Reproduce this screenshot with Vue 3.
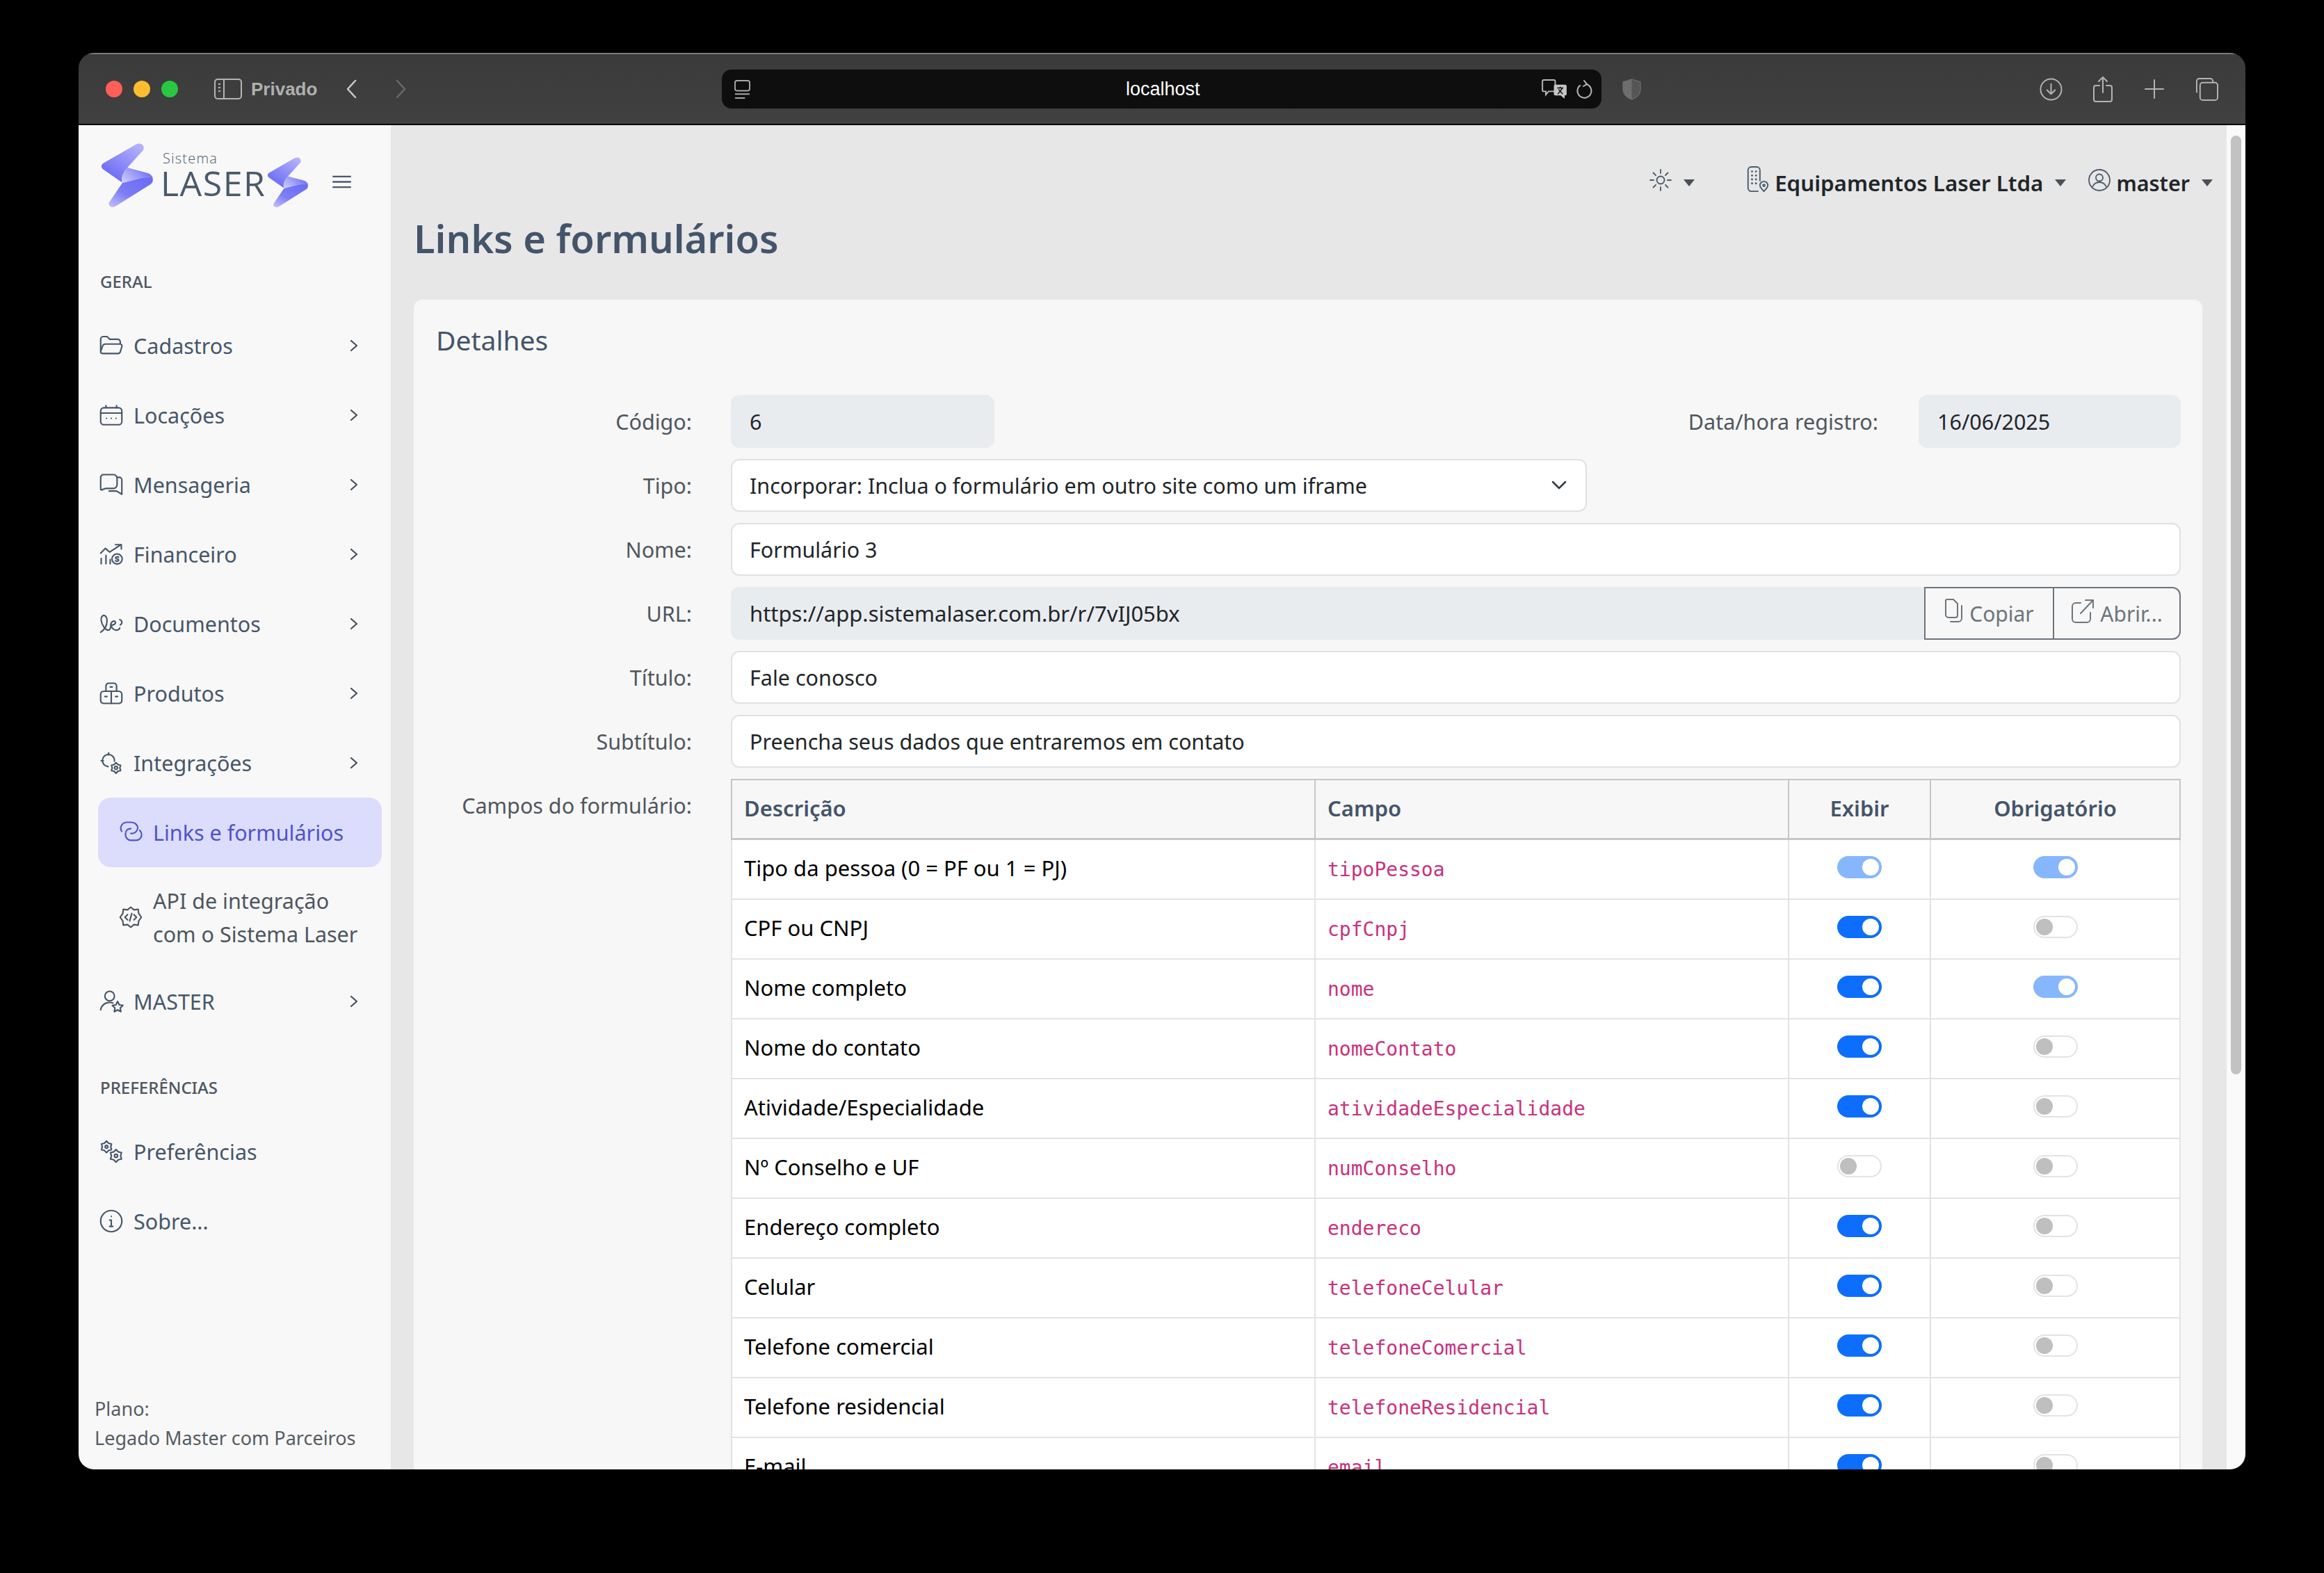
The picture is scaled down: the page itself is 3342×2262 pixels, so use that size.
<template>
  <div class="page">
    <div class="window">
      <header class="titlebar">
        <span class="light red"></span>
        <span class="light yellow"></span>
        <span class="light green"></span>
        <svg class="tb-sidebar" viewBox="0 0 40 30" fill="none" stroke="#b4b4b4" stroke-width="2">
          <rect x="1" y="1" width="38" height="28" rx="4" />
          <path d="M14 1v28M6 8h3M6 13h3M6 18h3" />
        </svg>
        <span class="private">Privado</span>
        <svg class="tb-back" viewBox="0 0 16 28" fill="none" stroke="#c8c8c8" stroke-width="2.5" stroke-linecap="round" stroke-linejoin="round">
          <path d="M14 2 3 14l11 12" />
        </svg>
        <svg class="tb-forward" viewBox="0 0 16 28" fill="none" stroke="#6a6a6a" stroke-width="2.5" stroke-linecap="round" stroke-linejoin="round">
          <path d="M2 2l11 12L2 26" />
        </svg>
        <div class="urlbar">
          <svg class="url-page" viewBox="0 0 24 28" fill="none" stroke="#a8a8a8" stroke-width="2">
            <rect x="1" y="1" width="22" height="15" rx="3" />
            <path d="M1 21h22M1 27h15" />
          </svg>
          <span class="url-text">localhost</span>
          <svg class="url-translate" viewBox="0 0 38 30">
            <path d="M3 1h15a2 2 0 0 1 2 2v13a2 2 0 0 1-2 2h-8l-4 5v-5H3a2 2 0 0 1-2-2V3a2 2 0 0 1 2-2z" fill="none" stroke="#b8b8b8" stroke-width="2" />
            <path d="M20 8h15a2 2 0 0 1 2 2v12a2 2 0 0 1-2 2h-1v5l-6-5h-8a2 2 0 0 1-2-2V10a2 2 0 0 1 2-2z" fill="#c4c4c4" />
            <path d="M23 13h9M27.500 11v2M24 22l7-9M25 15l6 7" stroke="#111" stroke-width="1.500" fill="none" />
          </svg>
          <svg class="url-reload" viewBox="0 0 24 30" fill="none" stroke="#b8b8b8" stroke-width="2" stroke-linecap="round">
            <path d="M15 7a10 10 0 1 1-9 2" />
            <path d="M12 2l4 5-5 3" />
          </svg>
        </div>
        <svg class="tb-shield" viewBox="0 0 28 32">
          <path d="M14 1 27 5v11c0 7-5 12-13 15C6 28 1 23 1 16V5z" fill="#555" stroke="#666" stroke-width="1.500" />
          <path d="M14 1 1 5v11c0 7 5 12 13 15z" fill="#6e6e6e" />
        </svg>
        <svg class="tb-download" viewBox="0 0 34 34" fill="none" stroke="#b4b4b4" stroke-width="2" stroke-linecap="round" stroke-linejoin="round">
          <circle cx="17" cy="17" r="15.500" />
          <path d="M17 9v15M11 18l6 6 6-6" />
        </svg>
        <svg class="tb-share" viewBox="0 0 28 38" fill="none" stroke="#b4b4b4" stroke-width="2" stroke-linecap="round" stroke-linejoin="round">
          <path d="M14 24V2M8 8l6-6 6 6" />
          <path d="M9 14H4a3 3 0 0 0-3 3v17a3 3 0 0 0 3 3h20a3 3 0 0 0 3-3V17a3 3 0 0 0-3-3h-5" />
        </svg>
        <svg class="tb-plus" viewBox="0 0 28 28" fill="none" stroke="#b4b4b4" stroke-width="2" stroke-linecap="round">
          <path d="M14 1v26M1 14h26" />
        </svg>
        <svg class="tb-tabs" viewBox="0 0 34 34" fill="none" stroke="#b4b4b4" stroke-width="2">
          <path d="M2 22V5a4 4 0 0 1 4-4h16a4 4 0 0 1 4 4v2" />
          <rect x="7" y="7" width="26" height="26" rx="4" />
        </svg>
      </header>

      <div class="body">
        <aside class="sidebar">
          <div class="brand">
            <svg class="bolt" viewBox="0 0 76 93">
              <defs>
                <linearGradient id="boltTop" x1="0.800" y1="0" x2="0.200" y2="0.800">
                  <stop offset="0" stop-color="#b3b0fb" />
                  <stop offset="1" stop-color="#6f70f5" />
                </linearGradient>
                <linearGradient id="boltFold" x1="0" y1="0.800" x2="1" y2="0.300">
                  <stop offset="0" stop-color="#cbc9fd" />
                  <stop offset="1" stop-color="#6a6bf4" />
                </linearGradient>
                <linearGradient id="boltLow" x1="0.900" y1="0" x2="0.100" y2="1">
                  <stop offset="0" stop-color="#6a6bf4" />
                  <stop offset="0.600" stop-color="#7c7df6" />
                  <stop offset="1" stop-color="#bcbafc" />
                </linearGradient>
              </defs>
              <path d="M50 2C57-2 64 3 61 10L39 34 30 56 4 38C0 35 0 32 3 29Z" fill="url(#boltTop)" />
              <path d="M31 57C45 54 60 48 74 48 76 54 74 58 70 60L22 90C16 94 10 91 12 85Z" fill="url(#boltLow)" />
              <path d="M38 35 68 43C74 46 75 49 74 50 60 48 45 54 31 57 28 50 32 41 38 35Z" fill="url(#boltFold)" />
            </svg>
            <div class="brand-text">
              <span class="brand-small">Sistema</span>
              <span class="brand-big">LASER</span>
            </div>
            <svg class="bolt bolt-small" viewBox="0 0 76 93">
              <path d="M50 2C57-2 64 3 61 10L39 34 30 56 4 38C0 35 0 32 3 29Z" fill="url(#boltTop)" />
              <path d="M31 57C45 54 60 48 74 48 76 54 74 58 70 60L22 90C16 94 10 91 12 85Z" fill="url(#boltLow)" />
              <path d="M38 35 68 43C74 46 75 49 74 50 60 48 45 54 31 57 28 50 32 41 38 35Z" fill="url(#boltFold)" />
            </svg>
            <svg class="burger" viewBox="0 0 30 20" fill="none" stroke="#4a5a6c" stroke-width="2.400">
              <path d="M1 2h28M1 10h28M1 18h28" />
            </svg>
          </div>

          <div class="section-title first">GERAL</div>
          <a v-for="item in mainItems" :key="item.label" class="nav-item" :class="item.kind">
            <svg class="nav-icon" viewBox="1.500 1.500 21 21" fill="none" stroke="currentColor" stroke-width="1.400" stroke-linecap="round" stroke-linejoin="round">
              <path v-for="d in item.icon" :key="d" :d="d" />
            </svg>
            <span class="nav-label" v-html="item.label"></span>
            <svg v-if="item.kind === 'parent'" class="nav-chevron" viewBox="0 0 12 20" fill="none" stroke="#44505e" stroke-width="2.200" stroke-linecap="round" stroke-linejoin="round">
              <path d="M2 3l8 7-8 7" />
            </svg>
          </a>

          <div class="section-title">PREFERÊNCIAS</div>
          <a v-for="item in prefItems" :key="item.label" class="nav-item">
            <svg class="nav-icon" viewBox="1.500 1.500 21 21" fill="none" stroke="currentColor" stroke-width="1.400" stroke-linecap="round" stroke-linejoin="round">
              <path v-for="d in item.icon" :key="d" :d="d" />
            </svg>
            <span class="nav-label">{{ item.label }}</span>
          </a>

          <div class="plan">
            <div>Plano:</div>
            <div>Legado Master com Parceiros</div>
          </div>
        </aside>

        <main class="main">
          <div class="topbar">
            <svg class="sun" viewBox="0 0 32 32" fill="none" stroke="#4a5a6c" stroke-width="1.800" stroke-linecap="round">
              <circle cx="16" cy="16" r="5.500" />
              <path d="M16 1v5M16 26v5M1 16h5M26 16h5M5.500 5.500l3.500 3.500M23 23l3.500 3.500M5.500 26.500 9 23M23 9l3.500-3.500" />
            </svg>
            <span class="caret slate"></span>
            <svg class="company" viewBox="0 0 32 40" fill="none" stroke="#4a5a6c" stroke-width="2" stroke-linecap="round">
              <path d="M16 38H6a5 5 0 0 1-5-5V6a5 5 0 0 1 5-5h8a5 5 0 0 1 5 5v16" />
              <path d="M7 8h.1M13 8h.1M7 14h.1M13 14h.1M7 20h.1M13 20h.1M7 26h.1M13 26h.1" stroke-width="3" />
              <path d="M25 38c-4-4-6-6-6-9a6 6 0 0 1 12 0c0 3-2 5-6 9z" />
              <circle cx="25" cy="29" r="1.500" />
            </svg>
            <span class="top-text company-name">Equipamentos Laser Ltda</span>
            <span class="caret"></span>
            <svg class="user" viewBox="0 0 32 32" fill="none" stroke="#4a5a6c" stroke-width="1.800">
              <circle cx="16" cy="16" r="15" />
              <circle cx="16" cy="12.500" r="5" />
              <path d="M6 26c2-5 6-7 10-7s8 2 10 7" />
            </svg>
            <span class="top-text">master</span>
            <span class="caret"></span>
          </div>

          <h1 class="page-title">Links e formulários</h1>

          <section class="card">
            <h2 class="card-title">Detalhes</h2>
            <div class="form">
              <label class="field-label">Código:</label>
              <div class="row-split">
                <input class="input readonly code-input" value="6" readonly />
                <label class="field-label date-label">Data/hora registro:</label>
                <input class="input readonly date-input" value="16/06/2025" readonly />
              </div>

              <label class="field-label">Tipo:</label>
              <div class="select-wrap">
                <select class="input select">
                  <option>Incorporar: Inclua o formulário em outro site como um iframe</option>
                </select>
                <svg class="select-chevron" viewBox="0 0 24 14" fill="none" stroke="#343a40" stroke-width="2.500" stroke-linecap="round" stroke-linejoin="round">
                  <path d="M3 2l9 9 9-9" />
                </svg>
              </div>

              <label class="field-label">Nome:</label>
              <input class="input" value="Formulário 3" />

              <label class="field-label">URL:</label>
              <div class="input-group">
                <input class="input readonly group-input" value="https://app.sistemalaser.com.br/r/7vIJ05bx" readonly />
                <button class="group-btn copy">
                  <svg class="btn-icon" viewBox="0 0 28 36" fill="none" stroke="#6c757d" stroke-width="2" stroke-linecap="round" stroke-linejoin="round">
                    <path d="M4 1h9l6 6v17a3 3 0 0 1-3 3H6a4 4 0 0 1-4-4V3a2 2 0 0 1 2-2z" />
                    <path d="M25 10v18a5 5 0 0 1-5 5H9" />
                  </svg>
                  Copiar
                </button>
                <button class="group-btn open">
                  <svg class="btn-icon wide" viewBox="0 0 34 36" fill="none" stroke="#6c757d" stroke-width="2" stroke-linecap="round" stroke-linejoin="round">
                    <path d="M14 6H7a5 5 0 0 0-5 5v18a5 5 0 0 0 5 5h16a5 5 0 0 0 5-5v-9" />
                    <path d="M14 21 32 2M21 2h11v11" />
                  </svg>
                  Abrir...
                </button>
              </div>

              <label class="field-label">Título:</label>
              <input class="input" value="Fale conosco" />

              <label class="field-label">Subtítulo:</label>
              <input class="input" value="Preencha seus dados que entraremos em contato" />

              <label class="field-label">Campos do formulário:</label>
              <table class="fields">
                <colgroup>
                  <col style="width: 839px" />
                  <col style="width: 681px" />
                  <col style="width: 204px" />
                  <col style="width: 359px" />
                </colgroup>
                <thead>
                  <tr>
                    <th>Descrição</th>
                    <th>Campo</th>
                    <th class="center">Exibir</th>
                    <th class="center">Obrigatório</th>
                  </tr>
                </thead>
                <tbody>
                  <tr v-for="f in fields" :key="f.code">
                    <td>{{ f.desc }}</td>
                    <td><code class="code">{{ f.code }}</code></td>
                    <td class="center"><span class="toggle" :class="toggleClass(f.show, f.showLocked)"></span></td>
                    <td class="center"><span class="toggle" :class="toggleClass(f.req, f.reqLocked)"></span></td>
                  </tr>
                </tbody>
              </table>
            </div>
          </section>
        </main>

        <div class="scrolltrack"><div class="scrollthumb"></div></div>
      </div>
    </div>
  </div>
</template>

<script setup>
// toothed gear outline, used by the settings style icons
function gear(cx, cy, r) {
  const pts = []
  for (let i = 0; i < 12; i++) {
    const a = (Math.PI / 6) * i
    const rad = i % 2 === 0 ? r : r * 0.72
    pts.push(`${(cx + rad * Math.sin(a)).toFixed(2)} ${(cy - rad * Math.cos(a)).toFixed(2)}`)
  }
  return 'M' + pts.join('L') + 'Z'
}

function circle(cx, cy, r) {
  return `M${cx - r} ${cy}a${r} ${r} 0 1 0 ${r * 2} 0a${r} ${r} 0 1 0 ${-r * 2} 0`
}

const mainItems = [
  {
    label: 'Cadastros',
    kind: 'parent',
    icon: [
      'M2 17V6a2.500 2.500 0 0 1 2.500-2.500H8l2.500 2.500H18a2.500 2.500 0 0 1 2.500 2.500V10',
      'M2 17.500 4 12a2.500 2.500 0 0 1 2.300-1.500h14A1.800 1.800 0 0 1 22 13l-1.500 5a2.500 2.500 0 0 1-2.400 1.500H4a2 2 0 0 1-2-2z',
    ],
  },
  {
    label: 'Locações',
    kind: 'parent',
    icon: [
      'M2 8a3 3 0 0 1 3-3h14a3 3 0 0 1 3 3v10a3 3 0 0 1-3 3H5a3 3 0 0 1-3-3z',
      'M2 10h20',
      'M7 3v2M17 3v2',
      'M7.500 15h.01M12 15h.01M16.500 15h.01',
    ],
  },
  {
    label: 'Mensageria',
    kind: 'parent',
    icon: [
      'M2 5a2.500 2.500 0 0 1 2.500-2.500H14A3.500 3.500 0 0 1 17.500 6v6a3.500 3.500 0 0 1-3.500 3.500H7L2.500 17 2 16.500z',
      'M18 5h1.500A2.500 2.500 0 0 1 22 7.500V21l-5-3H10',
    ],
  },
  {
    label: 'Financeiro',
    kind: 'parent',
    icon: [
      'M2.500 21v-5M7 21v-8M11 21v-4',
      'M2 11l4.500-4.500 4 3.500L21 3',
      'M16 3h5.500v4',
      circle(17.500, 16.500, 4.800),
      'M19 15c-1-1-3-.7-3 .5s3 .8 3 2-2 1.500-3 .5',
    ],
  },
  {
    label: 'Documentos',
    kind: 'parent',
    icon: [
      'M2 20c3-2 6-6 6-11 0-3-1.500-5-3-5S2 6 2.500 9c.6 4 4 9 6.500 9 2 0 2.500-2.500 2.500-4',
      'M11.500 13c0-2 1.500-3.500 3-3.500s2 1.500 1 2.500-3 1.500-4 1c1 3 3 5 5 5 1.500 0 3-.5 3.500-2',
      'M20 8c1 .5 2 1.500 2 2.500s-.5 2-1.500 2.500',
    ],
  },
  {
    label: 'Produtos',
    kind: 'parent',
    icon: [
      'M7 10V5a2.500 2.500 0 0 1 2.500-2.500h5A2.500 2.500 0 0 1 17 5v5',
      'M2 13a3 3 0 0 1 3-3h14a3 3 0 0 1 3 3v6a2.500 2.500 0 0 1-2.500 2.500h-15A2.500 2.500 0 0 1 2 19z',
      'M12 10v11.500M6 15h2M16 15h2M11 6h2',
    ],
  },
  {
    label: 'Integrações',
    kind: 'parent',
    icon: [
      'M9 15.500A5.700 5.700 0 1 1 15 10.500',
      'M9.500 2.500v2M2.500 10h2',
      gear(16.500, 16.800, 5),
      circle(16.500, 16.800, 1.400),
    ],
  },
  {
    label: 'Links e formulários',
    kind: 'active',
    icon: [
      'M3.500 11C1.500 8 3 3 8 2.500H12C16 2.500 19 5 18.500 8.500 18 11.500 15 13.500 12 13',
      'M12 8.500C8.500 8.500 7 11 7 14 7 17 9.500 19.500 12 19.500H17C20 19.500 22.300 17 22.300 14 22.300 12.500 21.500 11 20.500 10',
    ],
  },
  {
    label: 'API de integração<br>com o Sistema Laser',
    kind: 'sub',
    icon: [
      'M12 2.500l3 2.500 4-.5.5 4 2.500 3.500-2.500 3.500-.5 4-4-.5-3 2.500-3-2.500-4 .5-.5-4L2 12l2.500-3.500.5-4 4 .5z',
      'M9 9.500 6.500 12 9 14.500M15 9.500l2.500 2.500-2.500 2.500M13 8.500l-2 7',
    ],
  },
  {
    label: 'MASTER',
    kind: 'parent',
    icon: [
      circle(10.500, 7, 4.500),
      'M2 20c.5-4 4-7 8.500-7 1 0 2 .2 3 .5',
      'M18 12l1.600 3.300 3.400.5-2.500 2.400.6 3.500-3.100-1.700-3.100 1.700.6-3.500-2.500-2.400 3.400-.5z',
    ],
  },
]

const prefItems = [
  {
    label: 'Preferências',
    icon: [gear(7.500, 7.500, 5.500), circle(7.500, 7.500, 1.300), gear(16.500, 16, 6), circle(16.500, 16, 1.500)],
  },
  {
    label: 'Sobre...',
    icon: [circle(12, 12, 10), 'M12 7.500h.01', 'M10.500 11H12v6M10.500 17h3'],
  },
]

const fields = [
  { desc: 'Tipo da pessoa (0 = PF ou 1 = PJ)', code: 'tipoPessoa', show: true, showLocked: true, req: true, reqLocked: true },
  { desc: 'CPF ou CNPJ', code: 'cpfCnpj', show: true, req: false },
  { desc: 'Nome completo', code: 'nome', show: true, req: true, reqLocked: true },
  { desc: 'Nome do contato', code: 'nomeContato', show: true, req: false },
  { desc: 'Atividade/Especialidade', code: 'atividadeEspecialidade', show: true, req: false },
  { desc: 'Nº Conselho e UF', code: 'numConselho', show: false, req: false },
  { desc: 'Endereço completo', code: 'endereco', show: true, req: false },
  { desc: 'Celular', code: 'telefoneCelular', show: true, req: false },
  { desc: 'Telefone comercial', code: 'telefoneComercial', show: true, req: false },
  { desc: 'Telefone residencial', code: 'telefoneResidencial', show: true, req: false },
  { desc: 'E-mail', code: 'email', show: true, req: false },
]

function toggleClass(on, locked) {
  if (!on) return 'off'
  return locked ? 'on locked' : 'on'
}
</script>

<style>
html,
body {
  background: #000;
}
</style>

<style scoped>
.page {
  width: 3342px;
  height: 2262px;
  padding: 76px 113px 0;
  box-sizing: border-box;
  background: #000;
  font-family: 'Noto Sans', sans-serif;
  font-size: 30.5px;
  color: #000;
}

.window {
  width: 3116px;
  height: 2037px;
  display: flex;
  flex-direction: column;
  border-radius: 22px;
  overflow: hidden;
}

/* browser chrome */
.titlebar {
  height: 104px;
  box-sizing: border-box;
  flex: none;
  display: flex;
  align-items: center;
  padding: 0 0 0 39px;
  background: linear-gradient(#3a3a3a, #414141);
  border-top: 2px solid #7c7c7c;
  border-bottom: 2px solid #000;
}

.light {
  width: 24px;
  height: 24px;
  border-radius: 50%;
  margin-right: 16px;
  flex: none;
}

.red { background: #ff5f57; }
.yellow { background: #febc2e; }
.green { background: #28c840; }

.tb-sidebar {
  width: 40px;
  height: 30px;
  margin-left: 36px;
}

.private {
  margin-left: 13px;
  font-family: 'Liberation Sans', sans-serif;
  font-weight: 700;
  font-size: 26px;
  color: #b0b0b0;
  width: 94px;
  white-space: nowrap;
}

.tb-back {
  width: 16px;
  height: 28px;
  margin-left: 42px;
}

.tb-forward {
  width: 16px;
  height: 28px;
  margin-left: 56px;
}

.urlbar {
  width: 1265px;
  height: 56px;
  margin-left: 453px;
  background: #0e0e0e;
  border-radius: 14px;
  display: flex;
  align-items: center;
  position: relative;
  padding: 0 13px 0 18px;
  box-sizing: border-box;
}

.url-page {
  width: 23px;
  height: 27px;
}

.url-text {
  margin-left: 540px;
  width: 600px;
  font-family: 'Liberation Sans', sans-serif;
  font-size: 27px;
  color: #fff;
}

.url-translate {
  position: absolute;
  left: 1179px;
  top: 14px;
  width: 37px;
  height: 29px;
}

.url-reload {
  position: absolute;
  left: 1228px;
  top: 14px;
  width: 24px;
  height: 30px;
}

.tb-shield {
  width: 27px;
  height: 31px;
  margin-left: 30px;
}

.tb-download {
  width: 33px;
  height: 33px;
  margin-left: 573px;
}

.tb-share {
  width: 28px;
  height: 38px;
  margin-left: 44px;
}

.tb-plus {
  width: 28px;
  height: 28px;
  margin-left: 46px;
}

.tb-tabs {
  width: 33px;
  height: 33px;
  margin-left: 45px;
}

.body {
  flex: 1;
  min-height: 0;
  display: flex;
}

/* sidebar */
.sidebar {
  width: 449px;
  flex: none;
  display: flex;
  flex-direction: column;
  background: #f8f8f8;
  color: #46566a;
  box-sizing: border-box;
  padding: 0 13px 0 28px;
}

.brand {
  height: 126px;
  flex: none;
  display: flex;
  align-items: flex-start;
  position: relative;
}

.bolt {
  width: 76px;
  height: 93px;
  margin: 26px 0 0 4px;
  flex: none;
}

.bolt-small {
  width: 60px;
  height: 73px;
  margin: 46px 0 0 0;
}

.brand-text {
  width: 153px;
  margin: 36px 0 0 10px;
  display: flex;
  flex-direction: column;
  font-family: 'Open Sans', sans-serif;
  color: #4a5a6c;
}

.brand-small {
  font-size: 20px;
  font-weight: 300;
  line-height: 24px;
  letter-spacing: 1.200px;
  margin-left: 3px;
}

.brand-big {
  font-size: 50px;
  line-height: 46px;
  font-weight: 400;
  letter-spacing: 1.500px;
}

.burger {
  width: 29px;
  height: 19px;
  margin: 72px 0 0 33px;
}

.section-title {
  margin: 51px 0 19px 3px;
  height: 46px;
  line-height: 46px;
  font-size: 24px;
  font-weight: 500;
  color: #4d5560;
}

.section-title.first {
  margin-top: 76px;
}

.nav-item {
  height: 100px;
  flex: none;
  display: flex;
  align-items: center;
  padding: 0 34px 0 3px;
  box-sizing: border-box;
  font-size: 30.5px;
  border-radius: 18px;
}

.nav-icon {
  width: 32px;
  height: 32px;
  flex: none;
  margin-right: 16px;
  overflow: visible;
}

.nav-label {
  white-space: nowrap;
}

.nav-chevron {
  width: 12px;
  height: 20px;
  margin-left: auto;
  flex: none;
}

.nav-item.active,
.nav-item.sub {
  padding-left: 31px;
}

.nav-item.active {
  background: #dcdcfd;
  color: #4f54c8;
}

.nav-item.sub {
  height: 143px;
  color: #4d5560;
  line-height: 48px;
}

.plan {
  margin: auto 0 0 -5px;
  padding-bottom: 24px;
  font-size: 27px;
  line-height: 42px;
  color: #555c63;
  white-space: nowrap;
}

/* main */
.main {
  flex: 1;
  min-width: 0;
  background: #e7e7e7;
  padding: 0 35px 0 33px;
  overflow: hidden;
}

.topbar {
  display: flex;
  align-items: center;
  height: 160px;
  box-sizing: border-box;
  padding-top: 6px;
  margin-right: -15px;
  justify-content: flex-end;
  color: #212529;
}

.sun {
  width: 32px;
  height: 32px;
  margin-top: -8px;
}

.caret {
  width: 0;
  height: 0;
  border-left: 8.500px solid transparent;
  border-right: 8.500px solid transparent;
  border-top: 10px solid #4a5159;
  margin-left: 17px;
}

.company {
  width: 32px;
  height: 38px;
  margin: -10px 0 0 75px;
}

.top-text {
  font-size: 30.5px;
  font-weight: 600;
  margin-left: 8px;
  white-space: nowrap;
}

.company-name {
  font-size: 31.3px;
}

.user {
  width: 32px;
  height: 32px;
  margin: -8px 0 0 32px;
}

.page-title {
  margin: -34px 0 2px;
  height: 72px;
  line-height: 72px;
  font-size: 56px;
  font-weight: 600;
  color: #44546a;
}

.card {
  margin-top: 53px;
  background: #f7f7f7;
  border-radius: 12px;
  padding: 0 32px;
  height: 1700px;
}

.card-title {
  margin: 0;
  height: 137px;
  padding-top: 28px;
  box-sizing: border-box;
  line-height: 60px;
  font-size: 39px;
  font-weight: 400;
  color: #44546a;
}

.form {
  display: grid;
  grid-template-columns: 368px 1fr;
  column-gap: 56px;
  row-gap: 16px;
  align-items: start;
}

.field-label {
  height: 76px;
  line-height: 76px;
  text-align: right;
  color: #4f565d;
  white-space: nowrap;
}

.row-split {
  display: flex;
  align-items: center;
}

.input {
  height: 76px;
  box-sizing: border-box;
  width: 100%;
  padding: 0 25px;
  border: 2px solid #dee2e6;
  border-radius: 12px;
  background: #fff;
  color: #212529;
  font-family: inherit;
  font-size: 30.5px;
  outline: none;
}

.readonly {
  background: #e9ecef;
  border-color: #e9ecef;
}

.code-input {
  width: 379px;
  flex: none;
}

.date-label {
  margin-left: auto;
  margin-right: 58px;
}

.date-input {
  width: 377px;
  flex: none;
}

.select-wrap {
  width: 1231px;
  position: relative;
}

.select {
  appearance: none;
  display: block;
  padding-right: 60px;
}

.select-chevron {
  position: absolute;
  right: 28px;
  top: 31px;
  width: 24px;
  height: 14px;
}

.input-group {
  display: flex;
}

.group-input {
  flex: 1;
  min-width: 0;
  border-radius: 12px 0 0 12px;
  font-size: 31px;
}

.group-btn {
  height: 76px;
  box-sizing: border-box;
  flex: none;
  display: flex;
  align-items: center;
  justify-content: center;
  gap: 8px;
  background: transparent;
  border: 2px solid #6c757d;
  color: #6c757d;
  font-family: inherit;
  font-size: 30px;
  padding: 0;
}

.copy {
  width: 187px;
}

.open {
  width: 184px;
  margin-left: -2px;
  border-radius: 0 12px 12px 0;
}

.btn-icon {
  width: 28px;
  height: 36px;
  margin-top: -6px;
}

.btn-icon.wide {
  width: 34px;
}

.fields {
  table-layout: fixed;
  width: 2083px;
  border-collapse: collapse;
  background: #fff;
  border: 2px solid #c4c6c8;
  font-size: 31px;
}

.fields th {
  height: 79px;
  padding: 0 17px 4px;
  background: #f7f7f7;
  border: 2px solid #c4c6c8;
  border-bottom-width: 3px;
  text-align: left;
  font-weight: 600;
  color: #44546a;
}

.fields td {
  height: 86px;
  box-sizing: border-box;
  padding: 0 17px 4px;
  border: 2px solid #e1e3e5;
  color: #000;
  white-space: nowrap;
}

.fields .center {
  text-align: center;
}

.code {
  font-family: 'DejaVu Sans Mono', monospace;
  font-size: 28px;
  color: #c8327c;
}

.toggle {
  display: block;
  width: 64px;
  height: 32px;
  margin: -2px auto 0;
  box-sizing: border-box;
  border-radius: 16px;
  position: relative;
}

.toggle::after {
  content: '';
  position: absolute;
  top: 4px;
  width: 24px;
  height: 24px;
  border-radius: 50%;
}

.toggle.on { background: #0d6efd; }
.toggle.on.locked { background: #86b7fe; }
.toggle.on::after { right: 4px; background: #fff; }
.toggle.off { background: #fff; border: 2px solid #e1e3e5; }
.toggle.off::after { top: 2px; left: 2px; background: #bfbfbf; }

.scrolltrack {
  width: 27px;
  flex: none;
  background: #fafafa;
  box-sizing: border-box;
  padding: 15px 6px 0;
}

.scrollthumb {
  height: 1350px;
  border-radius: 8px;
  background: #c2c2c2;
}
</style>
